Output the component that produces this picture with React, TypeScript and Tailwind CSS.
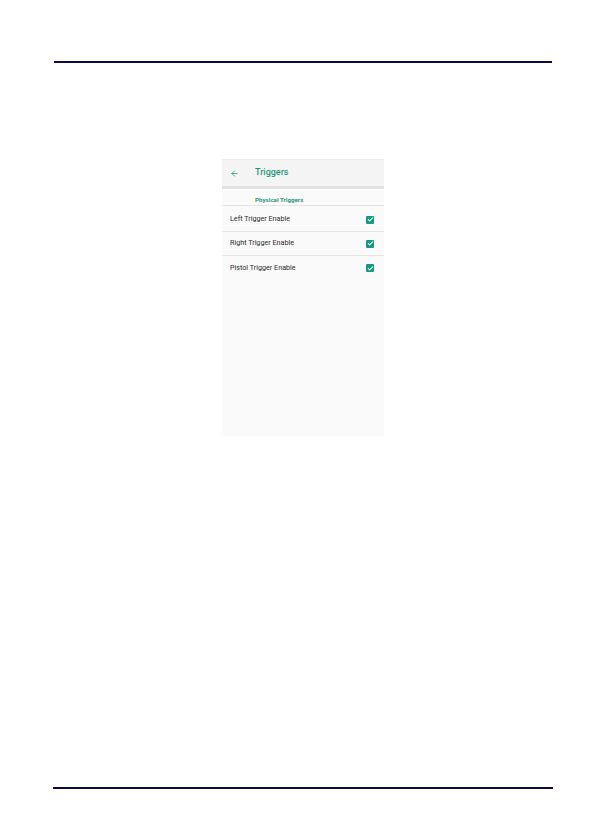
import { ArrowLeft, Check } from 'lucide-react'

const rows = ['Left Trigger Enable', 'Right Trigger Enable', 'Pistol Trigger Enable']

function TriggerRow({ label, last }: { label: string; last?: boolean }) {
  return (
    <div className={`flex h-[24px] items-center justify-between pl-[8px] pr-[10px] ${last ? '' : 'border-b border-[#e6e6e6]'}`}>
      <span className="text-[7.2px] text-[#2a2a2a]">{label}</span>
      <span className="flex h-[8px] w-[8px] items-center justify-center rounded-[1px] bg-[#159a80]">
        <Check className="h-[7px] w-[7px] text-white" strokeWidth={3.5} />
      </span>
    </div>
  )
}

export default function App() {
  return (
    <div className="flex h-[839px] w-[595px] flex-col bg-white font-['Roboto',sans-serif]">
      <div className="ml-[54px] mr-[43px] mt-[61px] h-[2px] bg-[#0d0a4a]" />

      <div className="mt-[96px] flex justify-center pl-[11px]">
        <div className="flex h-[277px] w-[162px] flex-col bg-[#fafafa]">
          <header className="flex h-[27px] items-center border-t border-[#ececec] bg-[#f4f4f4] pl-[8px]">
            <ArrowLeft className="h-[9px] w-[9px] text-[#159a80]" strokeWidth={2} />
            <span className="ml-[16px] text-[9px] font-medium text-[#1d9a77]">Triggers</span>
          </header>
          <div className="h-[3px] bg-[#e2e2e2]" />
          <div className="flex h-[17px] items-end border-b border-[#e6e6e6] pl-[33px]">
            <span className="text-[6.2px] leading-[9px] font-bold text-[#1d9a77]">Physical Triggers</span>
          </div>
          <div className="mt-[2px]">
            {rows.map((r, i) => (
              <TriggerRow key={r} label={r} last={i === rows.length - 1} />
            ))}
          </div>
        </div>
      </div>

      <div className="ml-[53px] mr-[42px] mt-auto mb-[50px] h-[2px] bg-[#0d0a4a]" />
    </div>
  )
}
